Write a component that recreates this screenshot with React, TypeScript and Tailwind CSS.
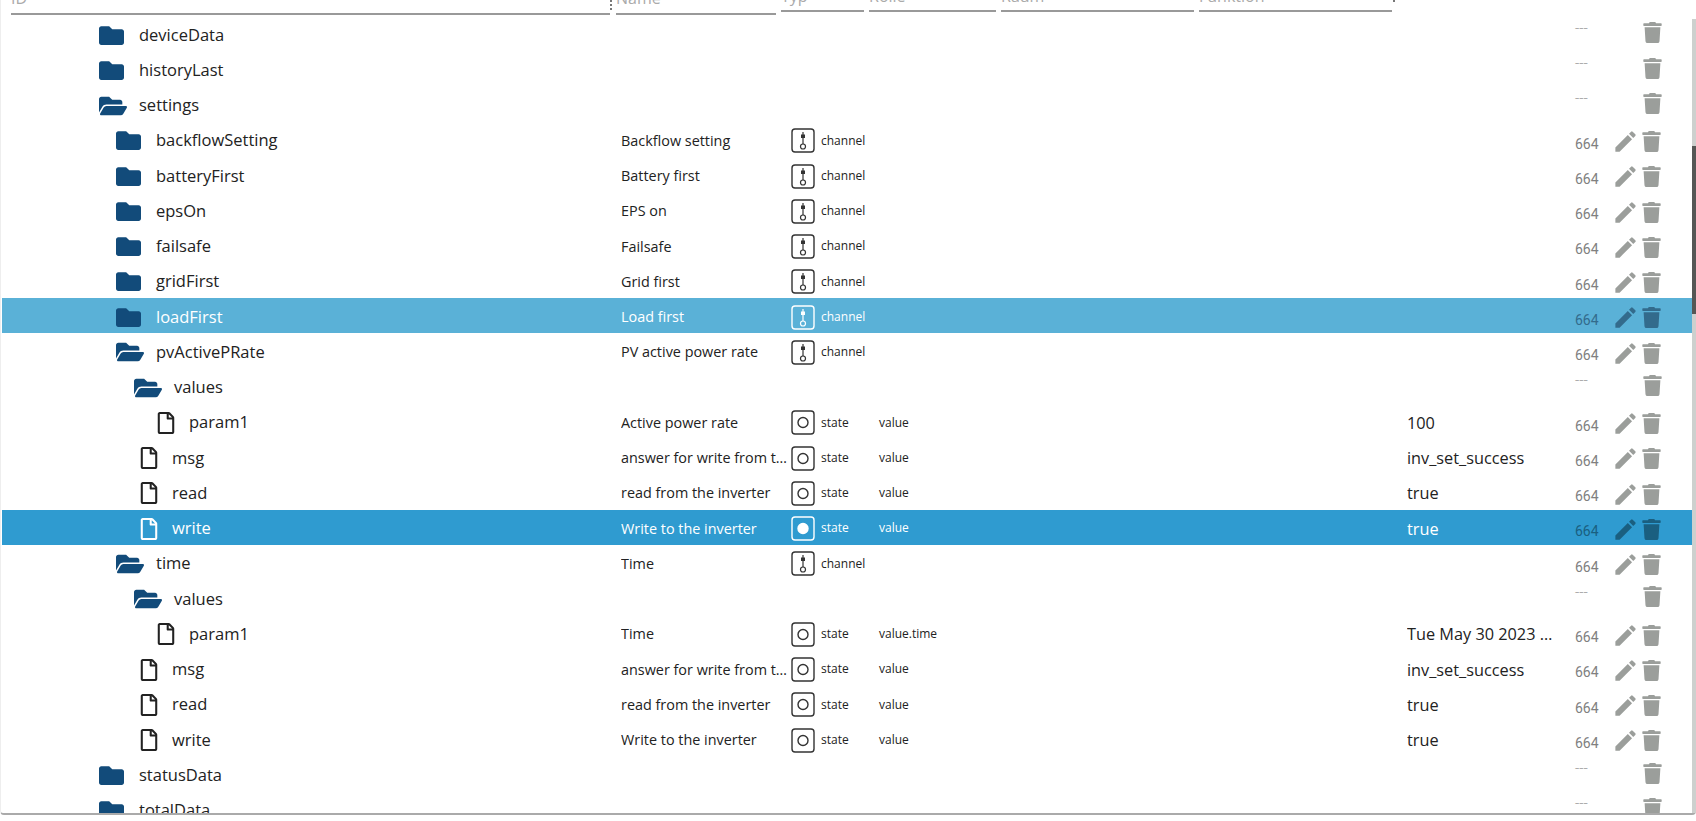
import React from 'react';
import { FaFolder, FaFolderOpen, FaRegFile, FaTrash } from 'react-icons/fa';
import { MdEdit } from 'react-icons/md';

type Kind = 'folder' | 'open' | 'file';

interface Row {
  id: string;
  kind: Kind;
  level: 'l0' | 'l1' | 'l2' | 'l3';
  name?: string;
  type?: 'channel' | 'state';
  role?: string;
  value?: string;
  selected?: 'light' | 'dark';
}

const rows: Row[] = [
  { id: 'deviceData', kind: 'folder', level: 'l0' },
  { id: 'historyLast', kind: 'folder', level: 'l0' },
  { id: 'settings', kind: 'open', level: 'l0' },
  { id: 'backflowSetting', kind: 'folder', level: 'l1', name: 'Backflow setting', type: 'channel' },
  { id: 'batteryFirst', kind: 'folder', level: 'l1', name: 'Battery first', type: 'channel' },
  { id: 'epsOn', kind: 'folder', level: 'l1', name: 'EPS on', type: 'channel' },
  { id: 'failsafe', kind: 'folder', level: 'l1', name: 'Failsafe', type: 'channel' },
  { id: 'gridFirst', kind: 'folder', level: 'l1', name: 'Grid first', type: 'channel' },
  { id: 'loadFirst', kind: 'folder', level: 'l1', name: 'Load first', type: 'channel', selected: 'light' },
  { id: 'pvActivePRate', kind: 'open', level: 'l1', name: 'PV active power rate', type: 'channel' },
  { id: 'values', kind: 'open', level: 'l2' },
  { id: 'param1', kind: 'file', level: 'l3', name: 'Active power rate', type: 'state', role: 'value', value: '100' },
  { id: 'msg', kind: 'file', level: 'l2', name: 'answer for write from the inverter', type: 'state', role: 'value', value: 'inv_set_success' },
  { id: 'read', kind: 'file', level: 'l2', name: 'read from the inverter', type: 'state', role: 'value', value: 'true' },
  { id: 'write', kind: 'file', level: 'l2', name: 'Write to the inverter', type: 'state', role: 'value', value: 'true', selected: 'dark' },
  { id: 'time', kind: 'open', level: 'l1', name: 'Time', type: 'channel' },
  { id: 'values', kind: 'open', level: 'l2' },
  { id: 'param1', kind: 'file', level: 'l3', name: 'Time', type: 'state', role: 'value.time', value: 'Tue May 30 2023 10:15:00' },
  { id: 'msg', kind: 'file', level: 'l2', name: 'answer for write from the inverter', type: 'state', role: 'value', value: 'inv_set_success' },
  { id: 'read', kind: 'file', level: 'l2', name: 'read from the inverter', type: 'state', role: 'value', value: 'true' },
  { id: 'write', kind: 'file', level: 'l2', name: 'Write to the inverter', type: 'state', role: 'value', value: 'true' },
  { id: 'statusData', kind: 'folder', level: 'l0' },
  { id: 'totalData', kind: 'folder', level: 'l0' },
];

const folderIndent = { l0: 'pl-[97px]', l1: 'pl-[114px]', l2: 'pl-[132px]', l3: 'pl-[150px]' };
const fileIndent = { l0: 'pl-[101px]', l1: 'pl-[119px]', l2: 'pl-[136px]', l3: 'pl-[153px]' };

const TypeIcon: React.FC<{ type: 'channel' | 'state'; selected?: 'light' | 'dark' }> = ({ type, selected }) => {
  const stroke = selected ? '#ffffff' : '#333333';
  return (
    <svg width="24" height="25" viewBox="0 0 24 25" fill="none">
      <rect x="1" y="1" width="22" height="23" rx="3" stroke={stroke} strokeWidth="1.4" />
      {type === 'channel' ? (
        <>
          <line x1="12" y1="4" x2="12" y2="16" stroke={stroke} strokeWidth="1.2" />
          <rect x="10" y="6.5" width="4" height="3.5" fill={stroke} />
          <circle cx="12" cy="18.5" r="2.5" stroke={stroke} strokeWidth="1.2" />
        </>
      ) : (
        <circle cx="12" cy="12.5" r="5" stroke={stroke} strokeWidth="1.4" fill={selected === 'dark' ? '#ffffff' : 'none'} />
      )}
    </svg>
  );
};

const TreeRow: React.FC<{ row: Row }> = ({ row }) => {
  const isObject = !!row.type;
  const bg = row.selected === 'light' ? 'bg-[#5ab1d7]' : row.selected === 'dark' ? 'bg-[#2f9bd0]' : '';
  const text = row.selected ? 'text-white' : 'text-[#222222]';
  const actionColor =
    row.selected === 'light' ? 'text-[#336b8c]' : row.selected === 'dark' ? 'text-[#1a5f80]' : 'text-[#9b9e9b]';
  const rightsColor =
    row.selected === 'light' ? 'text-[#336b8c]' : row.selected === 'dark' ? 'text-[#1a5f80]' : 'text-[#808080]';

  return (
    <div className={`flex h-[35.25px] items-center ${bg} ${text}`}>
      <div
        className={`flex w-[619px] shrink-0 items-center pt-[2.5px] text-[16.5px] ${
          row.kind === 'file' ? fileIndent[row.level] : folderIndent[row.level]
        }`}
      >
        {row.kind === 'file' ? (
          <span className="flex w-[34px] shrink-0 items-center">
            <FaRegFile size={22} className={row.selected ? 'text-white' : 'text-[#222222]'} />
          </span>
        ) : (
          <span className="flex w-[40px] shrink-0 items-center">
            {row.kind === 'open' ? (
              <FaFolderOpen size={28} className="text-[#124b7a]" />
            ) : (
              <FaFolder size={25} className="text-[#124b7a]" />
            )}
          </span>
        )}
        <span>{row.id}</span>
      </div>
      <div className="w-[171px] shrink-0 truncate pt-[2px] pr-[2px] text-[14.4px]">{row.name}</div>
      <div className="-ml-px flex w-[30px] shrink-0 items-center pt-[2.5px]">
        {row.type && <TypeIcon type={row.type} selected={row.selected} />}
      </div>
      <div className="w-[58px] shrink-0 pt-[2px] text-[12px]">{row.type}</div>
      <div className="w-[528px] shrink-0 pt-[2px] text-[12px]">{row.role}</div>
      <div className="w-[168px] shrink-0 truncate pt-[3px] pr-[14px] text-[16.3px]">{row.value}</div>
      {isObject ? (
        <div className={`flex flex-1 items-center pt-[4px] ${actionColor}`}>
          <span className={`w-[37px] shrink-0 pt-[5px] font-['Roboto',sans-serif] text-[14px] ${rightsColor}`}>664</span>
          <MdEdit size={27} className="shrink-0" />
          <FaTrash size={21} className="ml-[2px] shrink-0" />
        </div>
      ) : (
        <div className="flex flex-1 items-center text-[#9b9e9b]">
          <span className="mb-[12px] w-[67px] shrink-0 font-['Roboto',sans-serif] text-[15px] font-light text-[#999999]">---</span>
          <FaTrash size={21} className="mb-[2px] shrink-0" />
        </div>
      )}
    </div>
  );
};

const App: React.FC = () => {
  return (
    <div className="h-screen overflow-hidden bg-white font-['Open_Sans',sans-serif]">
      <div className="flex h-[815px] rounded-b-[4px] border-b-2 border-l border-b-[#aaaaaa] border-l-[#eeeeee]">
        <div className="ml-px flex-1 overflow-hidden">
          {/* Filter header, cut off at the top by the scrolled page */}
          <div className="flex h-[16.2px] items-start pl-[9px] text-[16px] text-[#aaaaaa]">
            <div className="flex h-[15px] w-[599px] items-end overflow-hidden border-b-2 border-[#999999]">
              <span className="mb-[3px]">ID</span>
            </div>
            <div className="mr-[4px] h-[10px] w-[2px] border-l-2 border-dotted border-[#777777]" />
            <div className="mr-[5px] flex h-[15px] w-[160px] items-end overflow-hidden border-b-2 border-[#999999]">
              <span className="mb-[3px]">Name</span>
            </div>
            <div className="mr-[5px] flex h-[12px] w-[83px] items-end overflow-hidden border-b-2 border-[#999999]">
              <span className="mb-[2px]">Typ</span>
            </div>
            <div className="mr-[5px] flex h-[12px] w-[127px] items-end overflow-hidden border-b-2 border-[#999999]">
              <span className="mb-[2px]">Rolle</span>
            </div>
            <div className="mr-[5px] flex h-[12px] w-[193px] items-end overflow-hidden border-b-2 border-[#999999]">
              <span className="mb-[2px]">Raum</span>
            </div>
            <div className="flex h-[12px] w-[193px] items-end overflow-hidden border-b-2 border-[#999999]">
              <span className="mb-[2px]">Funktion</span>
            </div>
            <div className="ml-px h-[2px] w-[2px] bg-[#777777]" />
          </div>
          {rows.map((row, i) => (
            <TreeRow key={i} row={row} />
          ))}
        </div>
        {/* Scrollbar */}
        <div className="flex w-[4px] shrink-0 flex-col">
          <div className="h-[19px]" />
          <div className="h-[127px] bg-[#cdd0ce]" />
          <div className="h-[168px] bg-[#555755]" />
          <div className="flex-1 bg-[#cdd0ce]" />
        </div>
      </div>
    </div>
  );
};

export default App;
